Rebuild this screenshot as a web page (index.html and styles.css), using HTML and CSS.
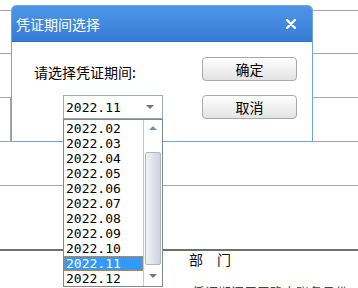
FILE: index.html
```html
<!DOCTYPE html>
<html lang="zh-CN">
<head>
    <meta charset="UTF-8">
    <title>凭证期间选择</title>
    <link rel="stylesheet" href="styles.css">
</head>
<body>
    <div class="page">
        <div class="rule r1"></div>
        <div class="rule r2"></div>
        <div class="rule r3"></div>
        <div class="rule r4"><div class="cell"></div></div>
        <div class="rule r5"></div>
        <div class="rule r6"></div>
        <div class="dept">部　门</div>
        <p class="note">凭证期间用于确定账务月份</p>
    </div>

    <!-- 弹出框 -->
    <div class="dialog">
        <div class="title">
            <span>凭证期间选择</span>
            <svg class="close" width="10" height="10" viewBox="0 0 10 10">
                <path d="M1 1 L9 9 M9 1 L1 9" stroke="#fff" stroke-width="2.4" stroke-linecap="round"/>
            </svg>
        </div>
        <div class="body">
            <div class="left">
                <div class="label">请选择凭证期间:</div>
                <div class="select">
                    <span>2022.11</span>
                    <i class="arr-down"></i>
                </div>
            </div>
            <div class="right">
                <button class="btn">确定</button>
                <button class="btn">取消</button>
            </div>
        </div>
    </div>

    <!-- 下拉列表 -->
    <div class="droplist">
        <ul class="items">
            <li>2022.02</li>
            <li>2022.03</li>
            <li>2022.04</li>
            <li>2022.05</li>
            <li>2022.06</li>
            <li>2022.07</li>
            <li>2022.08</li>
            <li>2022.09</li>
            <li>2022.10</li>
            <li class="sel">2022.11</li>
            <li>2022.12</li>
        </ul>
        <div class="sbar">
            <div class="sb-btn"><i class="arr-up"></i></div>
            <div class="track"><div class="thumb"></div></div>
            <div class="sb-btn"><i class="arr-down"></i></div>
        </div>
    </div>
</body>
</html>
```

FILE: styles.css
```css
body {
    margin: 0;
    font-family: "Noto Sans CJK SC", sans-serif;
    background: #fff;
    width: 358px;
    height: 288px;
    overflow: hidden;
}

/* 背景表格线 */
.rule {
    border-bottom: 1px solid #a6a6a6;
}
.r1 { height: 10px; }
.r2 { height: 42px; }
.r3 { height: 43px; }
.r4 { height: 43px; }
.r5 { height: 43px; }
.r6 {
    height: 63px;
    border-bottom: 2px solid #6e6e6e;
}
.r4 .cell {
    margin-left: 10px;
    height: 100%;
    border-left: 1px solid #a6a6a6;
}
.dept {
    padding-left: 189px;
    font-size: 14px;
    line-height: 16px;
    color: #111;
}
.note {
    margin: 17px 0 0;
    padding-left: 192px;
    font-size: 13px;
    line-height: 16px;
    color: #444;
    white-space: nowrap;
}

/* 弹出框 */
.dialog {
    position: absolute;
    left: 11px;
    top: 5px;
    width: 300px;
    height: 135px;
    border: 1px solid #6ea3e6;
    border-radius: 5px 5px 0 0;
    background: #fff;
    overflow: hidden;
}
.title {
    height: 35px;
    padding: 0 16px 0 4px;
    display: flex;
    align-items: center;
    justify-content: space-between;
    background: linear-gradient(#4f95e6, #367cd5);
    border-bottom: 1px solid #2f72cc;
    color: #fff;
    font-size: 14px;
}
.body {
    display: flex;
    justify-content: space-between;
    padding: 15px 15px 0 22px;
}
.label {
    margin-top: 3px;
    height: 24px;
    line-height: 24px;
    font-size: 14px;
    color: #000;
}
.select {
    margin: 11px 0 0 29px;
    width: 100px;
    height: 24px;
    box-sizing: border-box;
    border: 1px solid #a0a8b4;
    padding: 0 8px 0 2px;
    display: flex;
    align-items: center;
    justify-content: space-between;
    font-family: "DejaVu Sans Mono", monospace;
    font-size: 13px;
    color: #000;
}
.right {
    display: flex;
    flex-direction: column;
    gap: 14px;
}
.btn {
    width: 95px;
    height: 24px;
    padding: 0;
    border: 1px solid #a9a9a9;
    border-radius: 4px;
    background: linear-gradient(#fefefe, #e3e3e3);
    font-family: "Noto Sans CJK SC", sans-serif;
    font-size: 14px;
    color: #000;
}

/* 下拉列表 */
.droplist {
    position: absolute;
    left: 63px;
    top: 119px;
    width: 100px;
    height: 168px;
    box-sizing: border-box;
    border: 1px solid #838890;
    background: #fff;
    display: flex;
}
.items {
    flex: 1;
    margin: 0;
    padding: 1px 0 0;
    list-style: none;
    font-family: "DejaVu Sans Mono", monospace;
    font-size: 13px;
    color: #000;
}
.items li {
    height: 15px;
    line-height: 15px;
    padding-left: 2px;
}
.items li.sel {
    background: #3399ff;
    color: #fff;
    outline: 1px dotted #d88a3a;
    outline-offset: -1px;
}
.sbar {
    width: 18px;
    border-left: 1px solid #c9c9c9;
    display: flex;
    flex-direction: column;
}
.sb-btn {
    height: 16px;
    display: flex;
    align-items: center;
    justify-content: center;
}
.sb-btn:last-child {
    height: 20px;
}
.track {
    flex: 1;
    padding-top: 16px;
}
.thumb {
    height: 113px;
    margin: 0 1px;
    box-sizing: border-box;
    border: 1px solid #b4b4c4;
    border-radius: 2px;
    background: linear-gradient(to right, #f2f2f8, #d2d2e0);
}
.arr-up {
    width: 0;
    height: 0;
    border-left: 4px solid transparent;
    border-right: 4px solid transparent;
    border-bottom: 4px solid #7f8da0;
}
.arr-down {
    width: 0;
    height: 0;
    border-left: 4px solid transparent;
    border-right: 4px solid transparent;
    border-top: 4px solid #767676;
}
```
